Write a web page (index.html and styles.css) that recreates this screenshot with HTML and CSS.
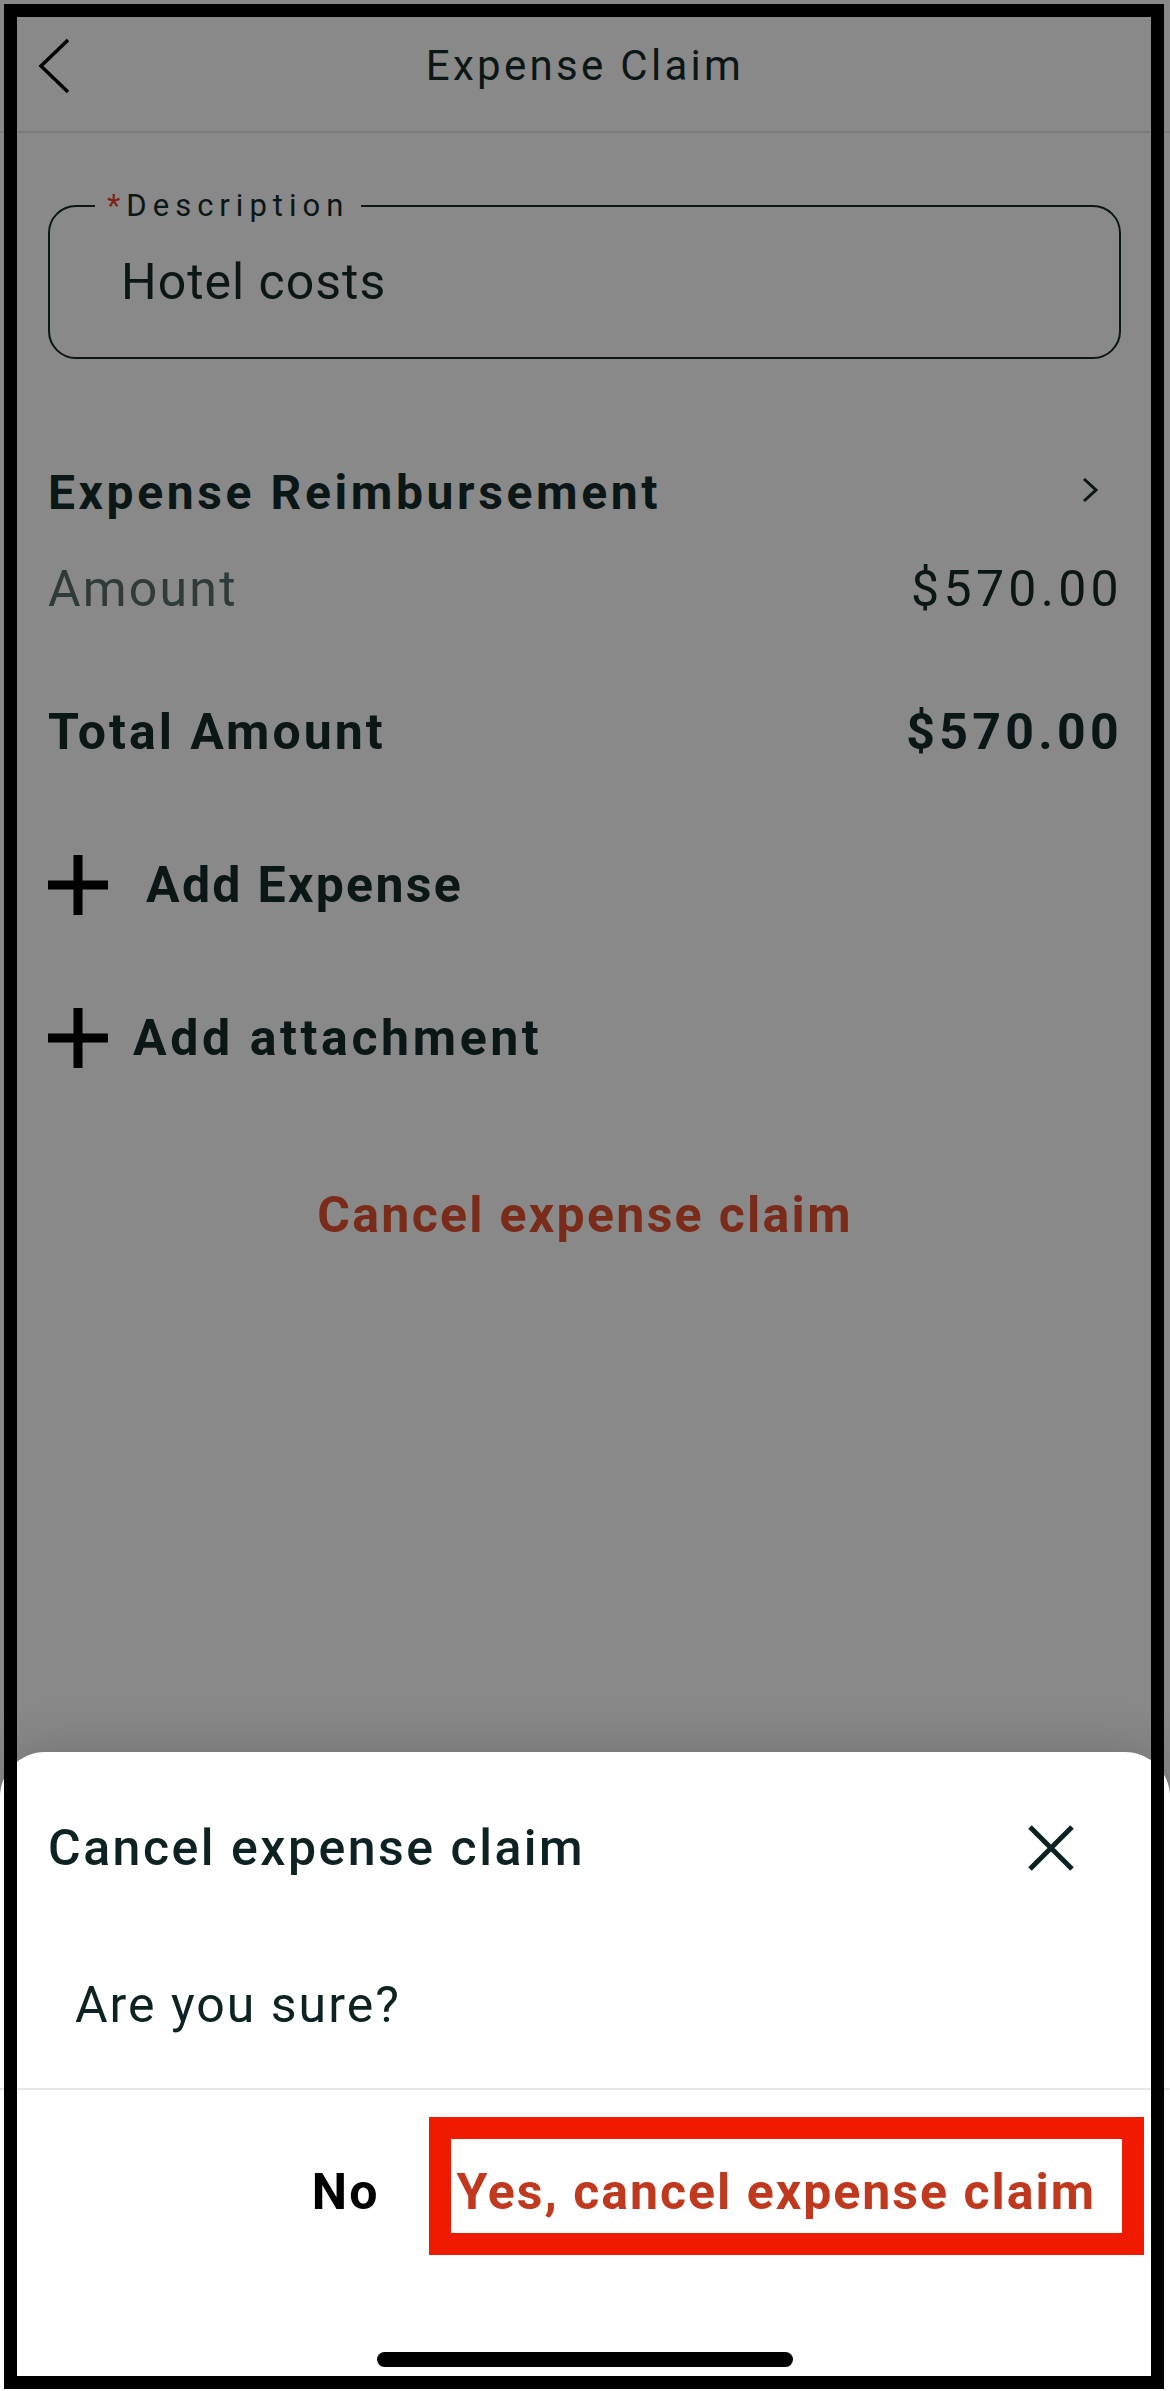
FILE: index.html
```html
<!DOCTYPE html>
<html>
    <head>
        <meta http-equiv="Content-Type" content="text/html; charset=utf8"/>
        <meta name="viewport" content="width=device-width, initial-scale=1.0"/>
        <title>Expense Claim</title>
        <link rel="stylesheet" href="styles.css">
    </head>
    <body>
        <div class="screen">
            <div class="topbar">
                <div class="back_btn">
                    <svg width="32" height="56" viewBox="0 0 32 56"><path d="M30 2 L3 28 L30 54" fill="none" stroke="#000" stroke-width="3.5"/></svg>
                </div>
                <div class="topbar_title">Expense Claim</div>
                <div class="topbar_spacer"></div>
            </div>

            <fieldset class="desc_field">
                <legend class="desc_label"><span class="required">*</span>Description</legend>
                <div class="desc_value">Hotel costs</div>
            </fieldset>

            <div class="row row_first">
                <span class="row_title">Expense Reimbursement</span>
                <svg class="row_chevron" width="20" height="26" viewBox="0 0 20 26"><path d="M4 2 L16 13 L4 24" fill="none" stroke="#0b1616" stroke-width="3"/></svg>
            </div>
            <div class="row row_amount">
                <span class="amount_label">Amount</span>
                <span class="amount_value">$570.00</span>
            </div>
            <div class="row row_total">
                <span class="total_label">Total Amount</span>
                <span class="total_value">$570.00</span>
            </div>

            <div class="add_row add_expense">
                <svg class="plus_icon" width="60" height="60" viewBox="0 0 60 60"><path d="M30 0 V60 M0 30 H60" stroke="#000" stroke-width="9"/></svg>
                <span class="add_text">Add Expense</span>
            </div>
            <div class="add_row add_attach">
                <svg class="plus_icon" width="60" height="60" viewBox="0 0 60 60"><path d="M30 0 V60 M0 30 H60" stroke="#000" stroke-width="9"/></svg>
                <span class="add_text">Add attachment</span>
            </div>

            <div class="cancel_link">Cancel expense claim</div>

            <div class="sheet">
                <div class="sheet_head">
                    <span class="sheet_title">Cancel expense claim</span>
                    <svg class="close_icon" width="48" height="48" viewBox="0 0 48 48"><path d="M3 3 L45 45 M45 3 L3 45" stroke="#0d2222" stroke-width="5"/></svg>
                </div>
                <div class="sheet_text">Are you sure?</div>
                <div class="sheet_line"></div>
                <div class="sheet_actions">
                    <span class="btn_no">No</span>
                    <span class="btn_yes">Yes, cancel expense claim</span>
                </div>
                <div class="home_bar"></div>
            </div>
        </div>
        <div class="frame"></div>
    </body>
</html>
```

FILE: styles.css
```css
body {
    margin: 0;
    width: 1170px; height: 2391px;
    overflow: hidden;
    position: relative;
    background: #898989;
    font-family: Roboto, "Liberation Sans", sans-serif;
    color: #0b1616;
}
.screen {
    display: flex; flex-direction: column;
    height: 2391px;
}

/* top bar */
.topbar {
    display: flex; align-items: center;
    height: 131px;
    border-bottom: 2px solid #7b7b7b;
    padding-left: 38px;
}
.back_btn { width: 32px; height: 56px; }
.back_btn svg { display: block; }
.topbar_title {
    flex: 1;
    text-align: center;
    font-size: 42px; letter-spacing: 3.3px;
}
.topbar_spacer { width: 70px; }

/* description */
.desc_field {
    margin: 57px 49px 0 48px;
    border: 2.5px solid #0b1616; border-radius: 28px;
    padding: 30px 0 45px 0;
}
.desc_label {
    margin-left: 45px;
    padding: 0 12px 0 12px;
    font-size: 31px; line-height: 32px; letter-spacing: 6px;
}
.required { color: #7e2417; }
.desc_value {
    padding-left: 71px;
    font-size: 50px; line-height: 60px; letter-spacing: 1px;
}

/* rows */
.row {
    display: flex; justify-content: space-between; align-items: center;
    margin: 0 51px 0 48px;
    line-height: 60px;
}
.row_first { margin-top: 104px; margin-right: 70px; }
.row_title { font-size: 48px; font-weight: 700; letter-spacing: 3.6px; }
.row_chevron { display: block; margin-top: -6px; }
.row_amount { margin-top: 36px; font-size: 50px; }
.amount_label { color: #2f3a3a; letter-spacing: 2.2px; }
.amount_value { letter-spacing: 4.3px; margin-right: -4px; }
.row_total { margin-top: 83px; font-size: 50px; font-weight: 700; }
.total_label { letter-spacing: 3px; }
.total_value { letter-spacing: 4.3px; margin-right: -4px; }

.add_row {
    display: flex; align-items: center;
    margin-left: 48px;
    height: 60px;
    font-size: 50px; font-weight: 700;
}
.plus_icon { display: block; }
.add_expense { margin-top: 93px; gap: 38px; letter-spacing: 2.3px; }
.add_attach { margin-top: 93px; gap: 25px; letter-spacing: 3.6px; }

.cancel_link {
    margin-top: 117px;
    text-align: center;
    font-size: 50px; line-height: 60px; font-weight: 700; letter-spacing: 2.3px;
    color: #7a2b19;
}

/* bottom sheet */
.sheet {
    margin-top: auto;
    background: #fff;
    border-radius: 45px 45px 0 0;
    box-shadow: 0 -12px 50px rgba(0, 0, 0, 0.13);
    padding-top: 66px;
    color: #0d2222;
}
.sheet_head {
    display: flex; justify-content: space-between; align-items: center;
    margin: 0 95px 0 48px;
    height: 60px;
}
.sheet_title { font-size: 50px; font-weight: 500; letter-spacing: 2.5px; }
.close_icon { display: block; }
.sheet_text {
    margin: 97px 0 0 75px;
    font-size: 50px; line-height: 60px; letter-spacing: 2px;
}
.sheet_line {
    margin-top: 53px;
    height: 2px;
    background: #e6e6e6;
}
.sheet_actions {
    display: flex; justify-content: flex-end; align-items: center;
    gap: 50px;
    margin-top: 27px;
    padding-right: 26px;
    font-size: 50px; line-height: 60px; font-weight: 700; letter-spacing: 2px;
}
.btn_no { color: #000; margin-top: 12px; }
.btn_yes {
    border: 22px solid #f01a00;
    padding: 23px 26px 11px 5px;
    color: #c0391f;
}
.home_bar {
    width: 416px; height: 15px;
    margin: 97px auto 24px;
    border-radius: 8px;
    background: #000;
}

/* device frame drawn over the screenshot */
.frame {
    position: absolute; left: 4px; top: 4px;
    width: 1160px; height: 2385px;
    border: 13px solid #000;
    box-sizing: border-box;
    pointer-events: none;
}
```
